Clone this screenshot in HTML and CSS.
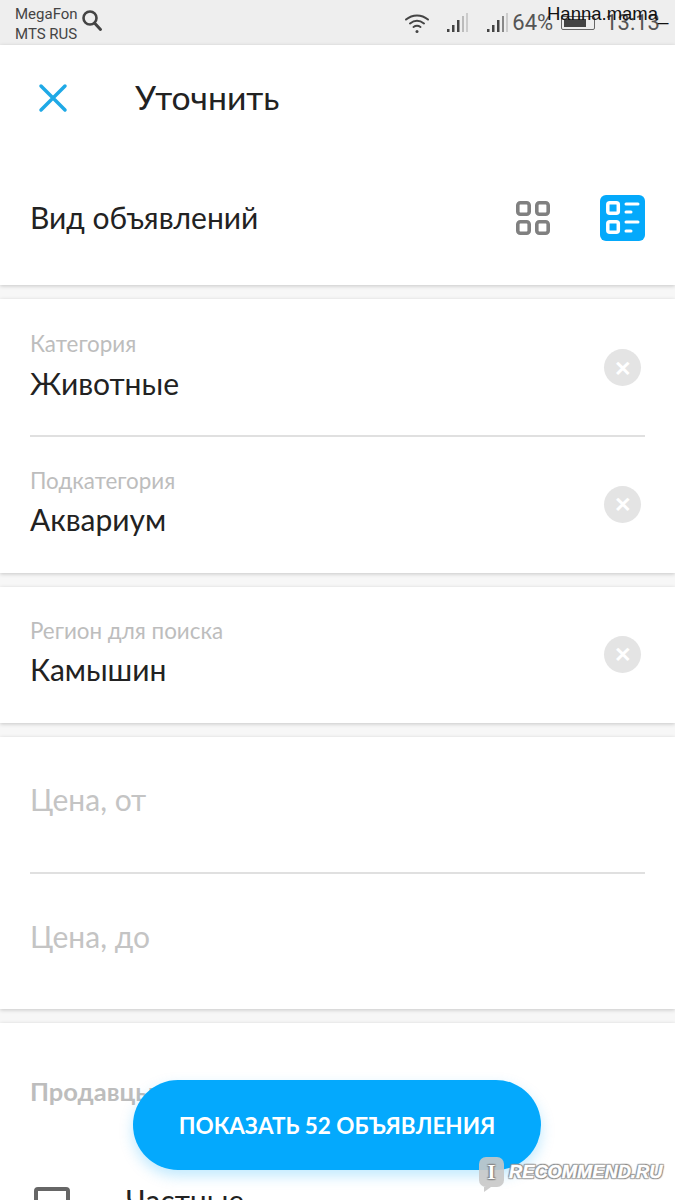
FILE: index.html
```html
<!DOCTYPE html>
<html lang="ru">
<head>
    <meta charset="UTF-8">
    <meta name="viewport" content="width=device-width, initial-scale=1.0">
    <title>Уточнить</title>
    <link rel="stylesheet" href="styles.css">
</head>
<body>
    <div class="screen">
        <div class="status-bar">
            <div class="carriers">
                <div>MegaFon</div>
                <div>MTS RUS</div>
            </div>
            <svg class="status-search" width="22" height="24" viewBox="0 0 22 24">
                <circle cx="9" cy="9" r="6.500" fill="none" stroke="#444" stroke-width="2.600"/>
                <path d="M13.500 14l6 6.500" stroke="#444" stroke-width="3" stroke-linecap="round"/>
            </svg>
            <div class="status-right">
                <svg class="wifi" width="26" height="22" viewBox="0 0 26 22" fill="none" stroke="#444" stroke-width="2" stroke-linecap="round">
                    <path d="M2 7.500c6.500-5.500 15.500-5.500 22 0"/>
                    <path d="M6 11.500c4.500-3.500 9.500-3.500 14 0"/>
                    <path d="M9.500 15c2.200-1.500 4.800-1.500 7 0"/>
                    <circle cx="13" cy="19.500" r="1.500" fill="#444" stroke="none"/>
                </svg>
                <svg class="signal-one" width="22" height="22" viewBox="0 0 22 22">
                    <rect x="0" y="17" width="2.500" height="3" fill="#444"/>
                    <rect x="5" y="13" width="2.500" height="7" fill="#444"/>
                    <rect x="10" y="8" width="2.500" height="12" fill="#444"/>
                    <rect x="15" y="4" width="2" height="16" fill="#bbb"/>
                    <rect x="19" y="1" width="2" height="19" fill="#ccc"/>
                </svg>
                <svg class="signal-two" width="22" height="22" viewBox="0 0 22 22">
                    <rect x="0" y="17" width="2.500" height="3" fill="#444"/>
                    <rect x="5" y="13" width="2.500" height="7" fill="#444"/>
                    <rect x="10" y="8" width="2.500" height="12" fill="#444"/>
                    <rect x="15" y="4" width="2" height="16" fill="#888"/>
                    <rect x="19" y="1" width="2" height="19" fill="#ccc"/>
                </svg>
                <span class="battery-text">64%</span>
                <span class="battery"><span class="battery-fill"></span></span>
                <span class="clock">13:13</span>
            </div>
            <div class="username">Hanna.mama_</div>
        </div>

        <div class="top-card">
            <div class="header">
                <svg class="close" width="30" height="30" viewBox="0 0 30 30">
                    <path d="M3 3l24 24M27 3L3 27" stroke="#1fa9e6" stroke-width="3.500" stroke-linecap="round"/>
                </svg>
                <h1>Уточнить</h1>
            </div>
            <div class="view-row">
                <span class="view-title">Вид объявлений</span>
                <svg class="grid-icon" width="34" height="34" viewBox="0 0 34 34" fill="none" stroke="#808080" stroke-width="3.600">
                    <rect x="1.800" y="1.800" width="11.400" height="11.400" rx="2.500"/>
                    <rect x="20.800" y="1.800" width="11.400" height="11.400" rx="2.500"/>
                    <rect x="1.800" y="20.800" width="11.400" height="11.400" rx="2.500"/>
                    <rect x="20.800" y="20.800" width="11.400" height="11.400" rx="2.500"/>
                </svg>
                <svg class="list-icon" width="45" height="46" viewBox="0 0 45 46">
                    <rect width="45" height="46" rx="6" fill="#04a9fb"/>
                    <g fill="none" stroke="#fff" stroke-width="3.500">
                        <rect x="7.800" y="7.800" width="10.500" height="10.500" rx="2"/>
                        <rect x="7.800" y="26.800" width="10.500" height="10.500" rx="2"/>
                    </g>
                    <g stroke="#fff" stroke-width="3" stroke-linecap="round">
                        <path d="M26 9h12M26 17h5M26 27h12M26 36h5"/>
                    </g>
                </svg>
            </div>
        </div>

        <div class="card">
            <div class="field">
                <div class="field-text">
                    <div class="field-label">Категория</div>
                    <div class="field-value">Животные</div>
                </div>
                <span class="clear">&#x2715;</span>
            </div>
            <div class="divider"></div>
            <div class="field field-second">
                <div class="field-text">
                    <div class="field-label">Подкатегория</div>
                    <div class="field-value">Аквариум</div>
                </div>
                <span class="clear">&#x2715;</span>
            </div>
        </div>

        <div class="card">
            <div class="field field-second">
                <div class="field-text">
                    <div class="field-label">Регион для поиска</div>
                    <div class="field-value">Камышин</div>
                </div>
                <span class="clear">&#x2715;</span>
            </div>
        </div>

        <div class="card">
            <div class="price">Цена, от</div>
            <div class="divider"></div>
            <div class="price">Цена, до</div>
        </div>

        <div class="card card-last">
            <div class="seller-title">Продавцы</div>
            <div class="check-row">
                <span class="checkbox"></span>
                <span class="check-label">Частные</span>
            </div>
        </div>

        <button class="show-button" type="button">ПОКАЗАТЬ 52 ОБЪЯВЛЕНИЯ</button>

        <div class="watermark">
            <span class="watermark-logo">I</span>
            <span class="watermark-text">RECOMMEND.RU</span>
        </div>
    </div>
</body>
</html>
```

FILE: styles.css
```css
html, body {
    margin: 0;
    padding: 0;
}
body {
    font-family: Lato, "Open Sans", sans-serif;
    background-color: #f7f7f7;
    color: #222;
}
.screen {
    position: relative;
    width: 675px;
    height: 1200px;
    overflow: hidden;
    background-color: #f7f7f7;
}
.status-bar {
    display: flex;
    align-items: center;
    height: 45px;
    padding: 0 15px;
    box-sizing: border-box;
    background-color: #eeeeee;
    color: #444;
    font-family: Roboto, sans-serif;
}
.carriers {
    font-size: 15px;
    line-height: 20px;
    padding-top: 3px;
}
.status-search {
    margin-left: 3px;
    margin-bottom: 3px;
}
.status-right {
    display: flex;
    align-items: center;
    margin-left: auto;
}
.wifi {
    margin-right: 17px;
}
.signal-one {
    margin-right: 18px;
}
.signal-two {
    margin-right: 3px;
}
.battery-text {
    font-size: 22px;
    color: #555;
}
.battery {
    display: block;
    width: 34px;
    height: 14px;
    margin-left: 8px;
    padding: 2px;
    box-sizing: border-box;
    border: 1px solid #666;
    border-radius: 2px;
}
.battery-fill {
    display: block;
    width: 22px;
    height: 100%;
    background-color: #444;
}
.clock {
    margin-left: 10px;
    font-size: 22px;
    color: #555;
}
.username {
    position: absolute;
    top: 3px;
    left: 547px;
    font-family: "Liberation Sans", Arial, sans-serif;
    font-size: 18.500px;
    line-height: 22px;
    color: #111;
}
.top-card {
    height: 240px;
    background-color: #fff;
    box-shadow: 0 1px 4px rgba(0, 0, 0, 0.2);
    margin-bottom: 14px;
}
.header {
    display: flex;
    align-items: center;
    height: 105px;
    padding-left: 38px;
}
.header h1 {
    margin: 0 0 2px 67px;
    font-size: 33.700px;
    font-weight: 400;
    color: #222;
}
.view-row {
    display: flex;
    align-items: center;
    padding: 44px 30px 0;
}
.view-title {
    font-size: 30px;
    margin-right: auto;
    margin-bottom: 1px;
}
.grid-icon {
    margin-right: 50px;
}
.list-icon {
    margin-top: 1px;
}
.card {
    background-color: #fff;
    box-shadow: 0 1px 4px rgba(0, 0, 0, 0.2);
    margin-bottom: 14px;
}
.field {
    display: flex;
    align-items: center;
    height: 136px;
    padding: 0 34px 0 30px;
    box-sizing: border-box;
}
.field-text {
    flex: 1;
    margin-top: -2px;
}
.field-second .field-text {
    margin-top: -4px;
}
.field-second .field-value {
    margin-top: 6px;
}
.field-label {
    font-size: 22.400px;
    line-height: 26px;
    color: #bdbdbd;
}
.field-value {
    font-size: 30px;
    line-height: 38px;
    margin-top: 7px;
    color: #222;
}
.clear {
    display: flex;
    align-items: center;
    justify-content: center;
    width: 37px;
    height: 37px;
    margin-top: 1px;
    border-radius: 50%;
    background-color: #e4e4e4;
    color: #fff;
    font-size: 21px;
    font-weight: 900;
}
.field-second .clear {
    margin-top: -2px;
}
.divider {
    height: 2px;
    margin: 0 30px;
    background-color: #e0e0e0;
}
.price {
    display: flex;
    align-items: center;
    height: 135px;
    padding: 0 0 11px 30px;
    box-sizing: border-box;
    font-size: 30px;
    color: #c4c4c4;
}
.card-last {
    height: 200px;
    margin-bottom: 0;
}
.seller-title {
    padding: 53px 0 0 30px;
    font-size: 25.500px;
    line-height: 30px;
    font-weight: 700;
    color: #bdbdbd;
}
.check-row {
    display: flex;
    align-items: center;
    margin-top: 71px;
    padding-left: 34px;
}
.checkbox {
    width: 28px;
    height: 28px;
    margin-top: 10px;
    border: 4px solid #666;
    border-radius: 4px;
}
.check-label {
    margin-left: 56px;
    font-size: 30px;
}
.show-button {
    position: absolute;
    top: 1080px;
    left: 133px;
    width: 408px;
    height: 90px;
    border: none;
    border-radius: 45px;
    background-color: #04a9fd;
    box-shadow: 0 6px 14px rgba(4, 169, 253, 0.25);
    color: #fff;
    font-family: Lato, sans-serif;
    font-size: 22.500px;
    font-weight: 700;
    cursor: pointer;
}
.watermark {
    position: absolute;
    top: 1157px;
    left: 479px;
    display: flex;
    align-items: center;
    gap: 5px;
    color: #fff;
    text-shadow: 0 0 2px #888, 1px 1px 1px #888, -1px -1px 1px #888, 1px -1px 1px #888, -1px 1px 1px #888;
}
.watermark-logo {
    position: relative;
    display: flex;
    align-items: center;
    justify-content: center;
    width: 25px;
    height: 30px;
    border-radius: 7px;
    background-color: rgba(200, 200, 200, 0.9);
    font-family: "Liberation Serif", serif;
    font-weight: 700;
    font-size: 20px;
}
.watermark-logo::after {
    content: '';
    position: absolute;
    left: 5px;
    bottom: -5px;
    border-top: 5px solid rgba(200, 200, 200, 0.9);
    border-right: 7px solid transparent;
}
.watermark-text {
    font-family: "Liberation Sans", sans-serif;
    font-size: 18.300px;
    font-weight: 700;
    font-style: italic;
    -webkit-text-stroke: 0.5px #fff;
}
```
